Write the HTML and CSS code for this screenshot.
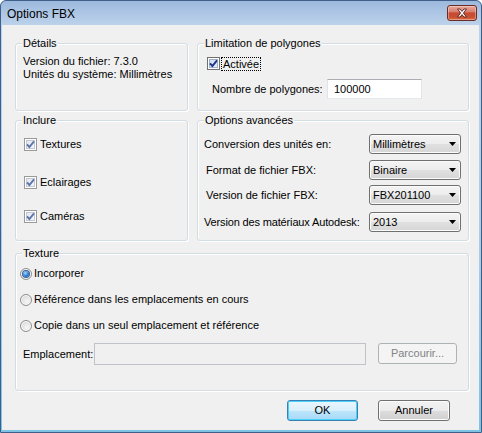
FILE: index.html
```html
<!DOCTYPE html>
<html lang="fr">
<head>
<meta charset="utf-8">
<title>Options FBX</title>
<link rel="stylesheet" href="styles.css">
</head>
<body>
<div class="window">
  <div class="titlebar">
    <span class="title">Options FBX</span>
    <div class="close">
      <svg width="12" height="10" viewBox="0 0 12 10"><path d="M1.5 1 L4 1 L6 3.4 L8 1 L10.5 1 L7.4 5 L10.5 9 L8 9 L6 6.6 L4 9 L1.5 9 L4.6 5 Z" fill="#fff" stroke="#5a1f1f" stroke-width="0.9" stroke-linejoin="round"/></svg>
    </div>
  </div>
  <div class="client">
    <div class="row row1">
      <div class="group">
        <div class="legend">Détails</div>
        <div class="details">
          <div>Version du fichier: 7.3.0</div>
          <div>Unités du système: Millimètres</div>
        </div>
      </div>
      <div class="group">
        <div class="legend">Limitation de polygones</div>
        <div class="check-row act">
          <span class="cb dark"><svg width="11" height="11" viewBox="0 0 11 11"><path d="M2 5.3 L4.4 8 L9 2.3" fill="none" stroke-width="1.9"/></svg></span>
          <span class="focus">Activée</span>
        </div>
        <div class="field-row">
          <span class="field-lbl">Nombre de polygones:</span>
          <div class="textbox">100000</div>
        </div>
      </div>
    </div>

    <div class="row row2">
      <div class="group">
        <div class="legend">Inclure</div>
        <div class="check-row inc r1">
          <span class="cb"><svg width="11" height="11" viewBox="0 0 11 11"><path d="M2 5.3 L4.4 8 L9 2.3" fill="none" stroke-width="1.9"/></svg></span>
          <span class="cb-text">Textures</span>
        </div>
        <div class="check-row inc r2">
          <span class="cb"><svg width="11" height="11" viewBox="0 0 11 11"><path d="M2 5.3 L4.4 8 L9 2.3" fill="none" stroke-width="1.9"/></svg></span>
          <span class="cb-text">Eclairages</span>
        </div>
        <div class="check-row inc r3">
          <span class="cb"><svg width="11" height="11" viewBox="0 0 11 11"><path d="M2 5.3 L4.4 8 L9 2.3" fill="none" stroke-width="1.9"/></svg></span>
          <span class="cb-text">Caméras</span>
        </div>
      </div>
      <div class="group">
        <div class="legend">Options avancées</div>
        <div class="opt-row o1">
          <span class="opt-lbl">Conversion des unités en:</span>
          <div class="combo"><span>Millimètres</span><svg width="7" height="4" viewBox="0 0 7 4"><path d="M0 0 H7 L3.5 4 Z" fill="#000"/></svg></div>
        </div>
        <div class="opt-row o2">
          <span class="opt-lbl ind">Format de fichier FBX:</span>
          <div class="combo"><span>Binaire</span><svg width="7" height="4" viewBox="0 0 7 4"><path d="M0 0 H7 L3.5 4 Z" fill="#000"/></svg></div>
        </div>
        <div class="opt-row o3">
          <span class="opt-lbl ind">Version de fichier FBX:</span>
          <div class="combo"><span>FBX201100</span><svg width="7" height="4" viewBox="0 0 7 4"><path d="M0 0 H7 L3.5 4 Z" fill="#000"/></svg></div>
        </div>
        <div class="opt-row o4">
          <span class="opt-lbl tight">Version des matériaux Autodesk:</span>
          <div class="combo"><span>2013</span><svg width="7" height="4" viewBox="0 0 7 4"><path d="M0 0 H7 L3.5 4 Z" fill="#000"/></svg></div>
        </div>
      </div>
    </div>

    <div class="group texture">
      <div class="legend">Texture</div>
      <div class="radio-row t1"><span class="radio on"></span><span>Incorporer</span></div>
      <div class="radio-row t2"><span class="radio"></span><span>Référence dans les emplacements en cours</span></div>
      <div class="radio-row t3"><span class="radio"></span><span>Copie dans un seul emplacement et référence</span></div>
      <div class="loc-row">
        <span class="loc-lbl">Emplacement:</span>
        <div class="loc-input"></div>
        <div class="btn disabled browse">Parcourir...</div>
      </div>
    </div>

    <div class="buttons">
      <div class="btn default ok">OK</div>
      <div class="btn cancel">Annuler</div>
    </div>
  </div>
</div>
</body>
</html>
```

FILE: styles.css
```css
* { box-sizing: border-box; }
html, body { margin: 0; padding: 0; background: #fff; }
body {
  font-family: "Liberation Sans", Arial, sans-serif;
  font-size: 11px;
  line-height: 13px;
  color: #000;
}

.window {
  width: 482px;
  height: 433px;
  border: 1px solid #3e5f8a;
  border-radius: 6px 6px 0 0;
  background: linear-gradient(#9cb9dc 0px, #b0c8e6 14px, #bcd2ea 24px, #a9cbe8 60%, #7ec3e4 100%);
  display: flex;
  flex-direction: column;
  overflow: hidden;
}

.titlebar {
  height: 24px;
  display: flex;
  align-items: flex-start;
  padding-left: 6px;
}
.title {
  font-size: 12px;
  line-height: 24px;
  margin-top: 1px;
  color: #000;
}
.close {
  margin-left: auto;
  margin-top: 4px;
  margin-right: 4px;
  width: 30px;
  height: 16px;
  border: 1px solid #6b2a24;
  border-radius: 3px;
  background: linear-gradient(#e9a99c 0%, #d9806f 40%, #c74a34 50%, #c9502f 80%, #d9704c 100%);
  box-shadow: inset 0 0 0 1px rgba(255,255,255,0.35);
  display: flex;
  align-items: center;
  justify-content: center;
}

.client {
  flex: 1;
  margin: 0 2px 2px 2px;
  background: #f0f0f0;
  padding: 18px 10px 0 12px;
  display: flex;
  flex-direction: column;
  box-shadow: -1px 0 0 #e8f1fa;
}

.row {
  display: grid;
  grid-template-columns: 173px 272px;
  column-gap: 9px;
}
.row1 { height: 68px; }
.row2 { height: 121px; margin-top: 9px; }

.group {
  border: 1px solid #d2dce3;
  border-radius: 3px;
  box-shadow: inset 1px 1px 0 #fff, 1px 1px 0 #fff;
  display: flex;
  flex-direction: column;
}
.legend {
  margin: -7px 0 0 6px;
  padding: 0 1px;
  background: #f0f0f0;
  line-height: 13px;
  height: 13px;
  width: fit-content;
  white-space: nowrap;
}

.details {
  margin-top: 5px;
  padding-left: 7px;
  white-space: nowrap;
}

.check-row {
  display: flex;
  align-items: center;
  height: 13px;
  white-space: nowrap;
}
.act { margin-top: 7px; padding-left: 9px; }
.inc { padding-left: 8px; }
.inc.r1 { margin-top: 11px; }
.inc.r2 { margin-top: 25px; }
.inc.r3 { margin-top: 21px; }

.cb {
  width: 13px;
  height: 13px;
  border: 1px solid #9a9a9a;
  background: linear-gradient(135deg, #dfe3ea, #f8f9fb);
  box-shadow: inset 0 0 0 1px #fff, inset 0 0 0 2px #c3c9d2;
  display: flex;
  flex: none;
}
.cb svg { display: block; }
.cb path { stroke: #5f74ad; }
.cb.dark { border-color: #707070; background: linear-gradient(135deg, #c9d7ec, #eef3fa); box-shadow: inset 0 0 0 1px #fff, inset 0 0 0 2px #9fb1cc; }
.cb.dark path { stroke: #1b3586; }
.cb-text { margin-left: 3px; }
.focus {
  margin-left: 1px;
  padding: 0 1px;
  border: 1px dotted #000;
  line-height: 12px;
}

.field-row {
  margin-top: 9px;
  display: flex;
  align-items: center;
  height: 20px;
  padding-left: 14px;
}
.field-lbl { width: 115px; white-space: nowrap; }
.textbox {
  width: 95px;
  height: 20px;
  border: 1px solid #e2e3ea;
  border-top-color: #abadb3;
  border-bottom-color: #e3e9ef;
  background: #fff;
  padding-left: 6px;
  line-height: 18px;
}

.opt-row {
  display: flex;
  align-items: center;
  height: 20px;
  padding-left: 6px;
  padding-right: 7px;
}
.o1 { margin-top: 7px; }
.o2 { margin-top: 6px; }
.o3 { margin-top: 5px; }
.o4 { margin-top: 7px; }
.opt-lbl { flex: 1; white-space: nowrap; }
.opt-lbl.ind { padding-left: 2px; }
.opt-lbl.tight { letter-spacing: -0.15px; }
.combo {
  width: 92px;
  height: 20px;
  border: 1px solid #707070;
  border-radius: 3px;
  background: linear-gradient(#f4f4f4 0%, #ececec 50%, #e0e0e0 51%, #d6d6d6 100%);
  box-shadow: inset 0 0 0 1px #fbfbfb;
  display: flex;
  align-items: center;
  padding: 0 4px 0 3px;
}
.combo span { flex: 1; }
.combo svg { display: block; }

.texture { height: 138px; margin-top: 12px; width: 454px; }
.radio-row {
  display: flex;
  align-items: center;
  height: 13px;
  padding-left: 4px;
  white-space: nowrap;
}
.t1 { margin-top: 7px; }
.t2 { margin-top: 13px; }
.t3 { margin-top: 13px; }
.radio {
  width: 12px;
  height: 12px;
  border-radius: 50%;
  border: 1px solid #8e8f8f;
  background: radial-gradient(circle at 60% 65%, #f6f6f6 0%, #dcdcdc 70%, #cfcfcf 100%);
  box-shadow: inset 0 0 0 1px #fafafa;
  margin-right: 2px;
  flex: none;
  display: flex;
  align-items: center;
  justify-content: center;
}
.radio.on::after {
  content: "";
  width: 6px;
  height: 6px;
  border-radius: 50%;
  background: radial-gradient(circle at 40% 35%, #a8dcff 0%, #2a7ad4 55%, #0d4796 100%);
  box-shadow: 0 0 0 1px #3b6296;
}

.loc-row {
  margin-top: 11px;
  display: flex;
  align-items: flex-start;
  padding-left: 7px;
}
.loc-lbl { width: 71px; line-height: 22px; white-space: nowrap; }
.loc-input {
  width: 272px;
  height: 22px;
  border: 1px solid #c0c3c8;
  background: #f0f0f0;
}

.btn {
  height: 21px;
  border: 1px solid #707070;
  border-radius: 3px;
  background: linear-gradient(#f2f2f2 0%, #ebebeb 50%, #dddddd 51%, #cfcfcf 100%);
  box-shadow: inset 0 0 0 1px #fcfcfc;
  display: flex;
  align-items: center;
  justify-content: center;
  white-space: nowrap;
}
.browse {
  width: 79px;
  margin-left: 12px;
  border-color: #adb2b5;
  background: #f4f4f4;
  box-shadow: none;
  color: #838383;
}
.buttons {
  margin-top: 9px;
  display: flex;
  justify-content: flex-end;
  gap: 20px;
  padding-right: 19px;
}
.ok {
  width: 71px;
  border-color: #3c7fb1;
  background: linear-gradient(#eaf6fd 0%, #d9f0fc 50%, #bee6fd 51%, #a7d9f5 100%);
  box-shadow: inset 0 0 0 1px #48d1fb;
}
.cancel { width: 72px; }
```
